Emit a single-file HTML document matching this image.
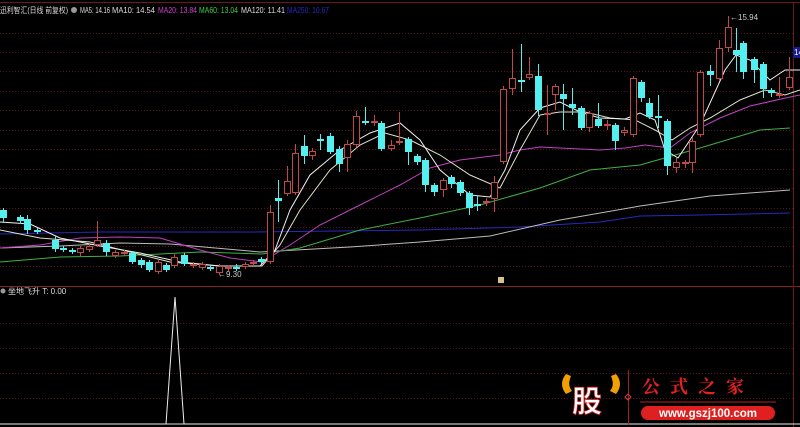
<!DOCTYPE html>
<html><head><meta charset="utf-8">
<style>
html,body{margin:0;padding:0;background:#000;width:800px;height:427px;overflow:hidden}
svg{display:block}
text{font-family:"Liberation Sans","Noto Sans CJK SC",sans-serif}
</style></head>
<body>
<svg id="s" width="800" height="427" viewBox="0 0 800 427" xmlns="http://www.w3.org/2000/svg">
<rect width="800" height="427" fill="#000"/>
<line x1="0" y1="2.5" x2="800" y2="2.5" stroke="#6a1a1a" stroke-width="1"/>
<g id="grid" stroke="#5a1616" stroke-width="1" stroke-dasharray="1,2"></g>
<line x1="0" y1="286.5" x2="800" y2="286.5" stroke="#8a2020" stroke-width="1"/>
<line x1="793.5" y1="3" x2="793.5" y2="427" stroke="#6a1a1a" stroke-width="1"/>
<g id="ma" fill="none" stroke-width="1"></g>
<g id="cdl"></g>
<text x="0" y="13" font-size="8" fill="#ddd" textLength="68" lengthAdjust="spacingAndGlyphs">迅利智汇(日线 前复权)</text>
<circle cx="74" cy="10" r="3" fill="#999"/>
<text x="80" y="13" font-size="8" fill="#ddd" textLength="30" lengthAdjust="spacingAndGlyphs">MA5: 14.16</text>
<text x="112" y="13" font-size="8" fill="#ddd" textLength="43" lengthAdjust="spacingAndGlyphs">MA10: 14.54</text>
<text x="158" y="13" font-size="8" fill="#d040d0" textLength="39" lengthAdjust="spacingAndGlyphs">MA20: 13.84</text>
<text x="199" y="13" font-size="8" fill="#40d040" textLength="39" lengthAdjust="spacingAndGlyphs">MA60: 13.04</text>
<text x="241" y="13" font-size="8" fill="#ddd" textLength="44" lengthAdjust="spacingAndGlyphs">MA120: 11.41</text>
<text x="287" y="13" font-size="8" fill="#2828c0" textLength="42" lengthAdjust="spacingAndGlyphs">MA250: 10.67</text>
<text x="730" y="20" font-size="8" fill="#ccc">←15.94</text>
<text x="218" y="277" font-size="8" fill="#ccc">←9.30</text>
<rect x="793" y="47" width="8" height="11" fill="#1a1a8a"/>
<text x="794" y="55" font-size="8" fill="#fff">14</text>
<rect x="498" y="277" width="6" height="6" fill="#d8c090"/>
<circle cx="3" cy="291" r="2.5" fill="#999"/>
<text x="8" y="294" font-size="8" fill="#ddd">坐地飞升 T: 0.00</text>
<line x1="0" y1="424" x2="800" y2="424" stroke="#ddd" stroke-width="1"/>
<polyline points="0,424 166,424 175,297 184,424 800,424" fill="none" stroke="#eee" stroke-width="1"/>
<g>
<path d="M566,374 q-8,10 0,20 l6,-3 q-5,-6 -1,-15z" fill="#f2a000"/>
<path d="M616,374 q8,10 0,20 l-6,-3 q5,-6 1,-15z" fill="#f2a000"/>
<text x="572" y="412" font-size="30" font-weight="bold" fill="#fff" stroke="#d02020" stroke-width="0.8" style="font-family:'Noto Sans CJK SC',sans-serif">股</text>
<line x1="628.5" y1="370" x2="628.5" y2="425" stroke="#a02020"/>
<path d="M628,394 l3,3 -3,3 -3,-3z" fill="none" stroke="#d04040"/>
<text x="642" y="393" font-size="18" font-weight="bold" fill="#e82020" letter-spacing="10" style="font-family:'Noto Serif CJK SC',serif">公式之家</text>
<line x1="640" y1="402" x2="776" y2="402" stroke="#b02020"/>
<rect x="641" y="406" width="134" height="14" rx="7" fill="#e02020"/>
<text x="708" y="417" font-size="11.5" font-weight="bold" fill="#fff" text-anchor="middle">www.gszj100.com</text>
</g>
</svg>
<script>
var NS="http://www.w3.org/2000/svg";
function el(p,n,a){var e=document.createElementNS(NS,n);for(var k in a)e.setAttribute(k,a[k]);p.appendChild(e);return e;}
var g=document.getElementById('grid');
[33,52,71,91,110,130,149,169,188,208,227,246,266,323,348,373,398].forEach(function(y){el(g,'line',{x1:0,y1:y+.5,x2:793,y2:y+.5});});
var ma=document.getElementById('ma');
function pl(c,p){el(ma,'polyline',{points:p,stroke:c});}
pl('#2828c0',"0,234 100,232 250,232 420,230 520,227 600,222 640,216 700,215 790,213");
pl('#bbb',"0,248 60,246 120,243 170,244 260,252 350,247 420,242 490,236 560,220 640,206 710,196 790,190");
pl('#40b040',"0,262 60,257 120,256 200,252 262,254 300,248 360,230 420,218 480,205 540,188 590,170 640,165 700,148 760,130 790,128");
pl('#c040c0',"0,248 40,245 80,238 120,237 160,238 200,250 230,258 262,262 290,245 320,225 360,205 400,185 430,168 460,160 500,155 520,150 540,147 560,148 600,150 625,148 645,145 670,148 690,133 720,118 750,106 790,97 800,95");
pl('#e0e0c8',"0,230 40,238 90,242 130,252 170,262 220,266 262,266 280,245 300,210 330,170 360,145 385,133 410,140 440,155 470,175 500,188 520,150 540,115 560,112 585,112 610,118 635,120 655,130 672,140 690,128 710,118 740,100 765,90 785,95 800,90");
pl('#f0f0f0',"0,222 30,224 60,238 100,246 140,253 180,262 220,266 260,266 275,250 290,210 310,175 340,150 370,133 400,123 420,140 440,170 470,195 490,197 505,170 520,130 540,108 560,102 580,112 600,118 625,119 640,113 655,120 665,150 678,158 700,125 725,70 736,55 750,60 770,80 785,70 800,70");
var C=[
[3,210,218,208,222,'d'],[20,217,221,215,224,'d'],[27,219,230,215,234,'d'],[37,230,232,228,234,'d'],
[55,240,249,236,252,'d'],[63,248,250,246,252,'d'],[72,250,252,248,254,'d'],[80,248,253,246,256,'u'],
[89,246,250,244,252,'u'],[97,240,245,221,247,'u'],[106,243,252,240,256,'d'],[115,252,256,250,258,'u'],
[124,252,254,250,256,'u'],[132,253,262,251,264,'d'],[141,260,265,258,268,'d'],[149,262,270,260,272,'d'],
[158,262,272,260,274,'u'],[166,265,270,263,272,'d'],[174,257,266,254,268,'u'],[184,255,264,253,266,'d'],
[193,264,266,262,268,'u'],[202,264,268,262,270,'u'],[210,267,269,265,271,'d'],[219,266,273,264,275,'u'],
[228,267,269,265,271,'u'],[236,267,269,264,271,'d'],[245,264,267,262,269,'u'],[253,262,264,260,266,'u'],
[261,259,262,257,264,'d'],[270,212,262,205,264,'u'],[278,198,201,180,222,'d'],[287,181,194,166,196,'u'],
[295,153,193,144,195,'u'],[304,146,156,135,164,'d'],[312,151,156,148,160,'u'],[320,139,141,134,150,'d'],
[330,136,152,133,154,'d'],[339,149,164,146,172,'d'],[347,144,158,140,172,'u'],[356,116,145,111,147,'u'],
[365,121,123,107,125,'d'],[374,121,123,115,126,'u'],[381,123,149,121,151,'d'],[391,145,149,140,151,'u'],
[399,141,143,112,145,'u'],[408,139,152,137,165,'d'],[417,156,162,154,165,'d'],[425,160,185,158,192,'d'],
[434,185,192,183,196,'d'],[443,180,190,178,197,'u'],[451,177,184,175,188,'d'],[460,182,193,180,196,'d'],
[469,193,208,191,215,'d'],[477,204,206,196,211,'d'],[486,201,203,198,206,'u'],[494,182,199,176,212,'u'],
[503,89,162,86,164,'u'],[512,78,89,49,95,'u'],[521,80,82,44,92,'d'],[529,74,78,57,80,'u'],
[538,76,110,64,116,'d'],[547,113,115,85,135,'u'],[555,86,95,84,110,'u'],[563,94,99,84,130,'d'],
[572,104,108,88,115,'d'],[581,108,128,106,130,'d'],[589,113,128,111,132,'u'],[598,119,126,103,128,'d'],
[607,124,126,120,130,'u'],[615,125,141,123,150,'d'],[624,130,133,127,136,'u'],[633,78,135,76,137,'u'],
[641,82,98,80,102,'d'],[649,103,117,98,119,'d'],[658,116,118,95,128,'d'],[667,121,166,119,175,'d'],
[676,162,168,158,173,'u'],[685,162,164,160,168,'u'],[692,141,163,137,173,'u'],[700,72,135,70,137,'u'],
[710,71,75,65,86,'d'],[719,48,79,40,81,'u'],[728,27,48,16,52,'u'],[736,50,55,28,72,'d'],
[743,43,72,41,79,'d'],[754,59,70,57,83,'d'],[763,64,89,62,98,'d'],[771,90,93,88,97,'d'],
[779,94,96,77,98,'u'],[789,77,88,57,90,'u']];
var cg=document.getElementById('cdl');
C.forEach(function(c){
 var x=c[0],col=c[5]=='d'?'#54f0f0':'#c04848';
 el(cg,'line',{x1:x+.5,y1:c[3],x2:x+.5,y2:c[4],stroke:col});
 var h=Math.max(1,c[2]-c[1]);
 if(c[5]=='d') el(cg,'rect',{x:x-3,y:c[1],width:7,height:h,fill:col});
 else el(cg,'rect',{x:x-2.5,y:c[1]+.5,width:6,height:Math.max(0.5,h-1),fill:'#000',stroke:col});
});
</script>
</body></html>
